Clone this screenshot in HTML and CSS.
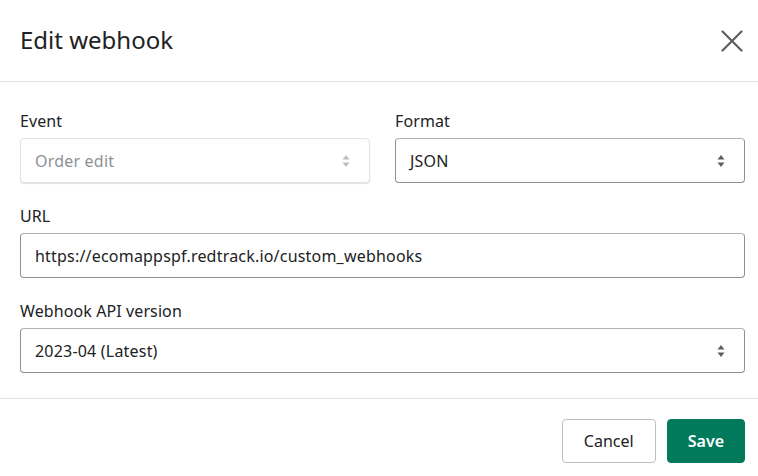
FILE: index.html
```html
<!DOCTYPE html>
<html>
<head>
<meta charset="utf-8">
<link rel="stylesheet" href="styles.css">
</head>
<body>
<div class="modal">
  <div class="header">
    <h1 class="title">Edit webhook</h1>
    <button class="close" aria-label="Close">
      <svg width="22" height="22" viewBox="0 0 22 22"><path d="M1.5 1.5 L20.5 20.5 M20.5 1.5 L1.5 20.5" stroke="#5c5f62" stroke-width="2.2" stroke-linecap="round" fill="none"/></svg>
    </button>
  </div>
  <div class="body">
    <div class="row2">
      <div class="field">
        <div class="label">Event</div>
        <div class="control disabled">
          <span class="value">Order edit</span>
          <svg class="arrows" width="8" height="14" viewBox="0 0 8 14"><path d="M4 1 L7.5 5.5 H0.5 Z M4 13 L7.5 8.5 H0.5 Z" fill="currentColor"/></svg>
        </div>
      </div>
      <div class="field">
        <div class="label">Format</div>
        <div class="control">
          <span class="value">JSON</span>
          <svg class="arrows" width="8" height="14" viewBox="0 0 8 14"><path d="M4 1 L7.5 5.5 H0.5 Z M4 13 L7.5 8.5 H0.5 Z" fill="currentColor"/></svg>
        </div>
      </div>
    </div>
    <div class="field">
      <div class="label">URL</div>
      <div class="control">
        <span class="value">https://ecomappspf.redtrack.io/custom_webhooks</span>
      </div>
    </div>
    <div class="field">
      <div class="label">Webhook API version</div>
      <div class="control">
        <span class="value">2023-04 (Latest)</span>
        <svg class="arrows" width="8" height="14" viewBox="0 0 8 14"><path d="M4 1 L7.5 5.5 H0.5 Z M4 13 L7.5 8.5 H0.5 Z" fill="currentColor"/></svg>
      </div>
    </div>
  </div>
  <div class="footer">
    <button class="btn">Cancel</button>
    <button class="btn primary">Save</button>
  </div>
</div>
</body>
</html>
```
FILE: styles.css
```css
* { box-sizing: border-box; }
html, body { margin: 0; padding: 0; background: #ffffff; }
body {
  font-family: "Segoe UI", "Noto Sans", "Open Sans", sans-serif;
  color: #202223;
  width: 758px;
  height: 476px;
  overflow: hidden;
}
.modal { display: flex; flex-direction: column; }
.header {
  height: 82px;
  border-bottom: 1px solid #e1e3e5;
  display: flex;
  align-items: center;
  justify-content: space-between;
  padding: 0 14px 0 20px;
}
.title {
  margin: 0;
  font-size: 24px;
  font-weight: 400;
  color: #202223;
  line-height: 30px;
  padding-bottom: 2px;
}
.close {
  border: 0;
  background: none;
  padding: 0;
  width: 24px;
  height: 24px;
  display: flex;
  align-items: center;
  justify-content: center;
}
.body {
  padding: 27px 13px 25px 20px;
  display: flex;
  flex-direction: column;
  gap: 21px;
  border-bottom: 1px solid #e1e3e5;
}
.row2 {
  display: grid;
  grid-template-columns: 350px 350px;
  column-gap: 25px;
}
.field { display: flex; flex-direction: column; }
.label {
  font-size: 16px;
  letter-spacing: 0.1px;
  line-height: 24px;
  color: #202223;
  margin-bottom: 5px;
}
.control {
  height: 45px;
  border: 1px solid #8c9196;
  border-top-color: #aeb4b9;
  border-radius: 4px;
  display: flex;
  align-items: center;
  justify-content: space-between;
  padding: 0 19px 0 14px;
  font-size: 16px;
  letter-spacing: 0.2px;
  color: #202223;
  background: #fff;
}
.control .arrows { color: #5c5f62; }
.control.disabled {
  border-color: #e1e3e5;
  box-shadow: 0 1px 1px rgba(0,0,0,0.12);
  color: #8c9196;
}
.control.disabled .arrows { color: #babfc3; }
.footer {
  display: flex;
  justify-content: flex-end;
  gap: 11px;
  padding: 20px 13px 0 20px;
}
.btn {
  font-family: inherit;
  height: 44px;
  border-radius: 4px;
  border: 1px solid #babfc3;
  background: #fff;
  color: #202223;
  font-size: 16px;
  padding: 0 20px;
  min-width: 94px;
}
.btn.primary {
  background: #007a5a;
  border-color: #007a5a;
  color: #fff;
  font-weight: 600;
  min-width: 76px;
}
```
